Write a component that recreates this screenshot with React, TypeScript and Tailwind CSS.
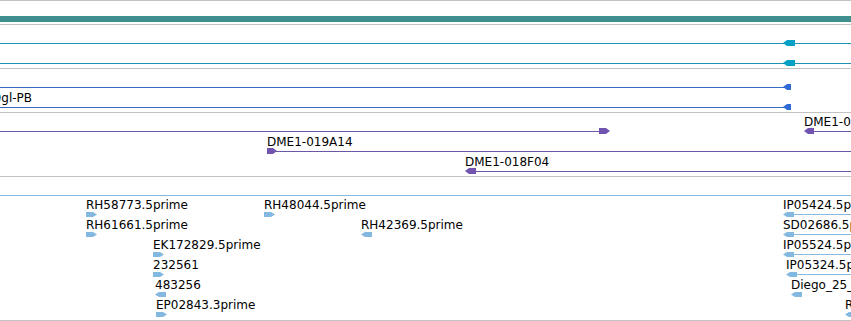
import React from 'react';

type Dir = 'left' | 'right';

interface Feat {
  label?: string;
  lx?: number; // label x
  y: number; // row of the feature line (page coords)
  x1: number;
  x2: number;
  ax?: number; // arrow x
  dir?: Dir;
  aw?: number;
  ah?: number;
  line: string;
  fill: string;
}

interface Track {
  top: number; // first content row on the page
  h: number;
  feats: Feat[];
  bar?: { y: number; h: number; color: string };
}

const CYAN = { line: '#1f93ad', fill: '#05a0c6' };
const BLUE = { line: '#3a69c4', fill: '#2f6bd6' };
const PURPLE = { line: '#6c56a6', fill: '#7153b0' };
const LBLUE = { line: '#8ab9de', fill: '#83b8e0' };

const lb = (label: string, x: number, base: number, dir: Dir, tail = 0): Feat => ({
  label,
  lx: x,
  y: base + 5,
  x1: dir === 'left' ? x + 8 : x,
  x2: tail ? 851 : x,
  ax: x,
  dir,
  aw: 11,
  ah: 5,
  ...LBLUE,
});

const tracks: Track[] = [
  { top: 1, h: 23, bar: { y: 16, h: 6, color: '#408f8f' }, feats: [] },
  {
    top: 25,
    h: 43,
    feats: [
      { y: 43, x1: 0, x2: 851, ax: 783, dir: 'left', aw: 12, ah: 6, ...CYAN },
      { y: 63, x1: 0, x2: 851, ax: 783, dir: 'left', aw: 12, ah: 6, ...CYAN },
    ],
  },
  {
    top: 69,
    h: 43,
    feats: [
      { y: 87, x1: 0, x2: 786, ax: 783, dir: 'left', aw: 8, ah: 6, ...BLUE },
      { label: 'l(2)gl-PB', lx: -19, y: 107, x1: 0, x2: 786, ax: 783, dir: 'left', aw: 8, ah: 6, ...BLUE },
    ],
  },
  {
    top: 113,
    h: 63,
    feats: [
      { y: 131, x1: 0, x2: 602, ax: 599, dir: 'right', aw: 11, ah: 6, ...PURPLE },
      { label: 'DME1-020C09', lx: 804, y: 131, x1: 810, x2: 851, ax: 804, dir: 'left', aw: 10, ah: 6, ...PURPLE },
      { label: 'DME1-019A14', lx: 267, y: 151, x1: 270, x2: 851, ax: 267, dir: 'right', aw: 10, ah: 6, ...PURPLE },
      { label: 'DME1-018F04', lx: 465, y: 171, x1: 470, x2: 851, ax: 465, dir: 'left', aw: 11, ah: 6, ...PURPLE },
    ],
  },
  {
    top: 177,
    h: 143,
    feats: [
      { y: 195, x1: 0, x2: 851, ...LBLUE },
      lb('RH58773.5prime', 86, 209, 'right'),
      lb('RH48044.5prime', 264, 209, 'right'),
      lb('IP05424.5prime', 783, 209, 'left', 1),
      lb('RH61661.5prime', 86, 229, 'right'),
      lb('RH42369.5prime', 361, 229, 'left'),
      lb('SD02686.5prime', 783, 229, 'left', 1),
      lb('EK172829.5prime', 153, 249, 'right'),
      lb('IP05524.5prime', 783, 249, 'left', 1),
      lb('232561', 153, 269, 'right'),
      lb('IP05324.5prime', 786, 269, 'left', 1),
      lb('483256', 155, 289, 'left'),
      lb('Diego_25_D11', 791, 289, 'left'),
      lb('EP02843.3prime', 156, 309, 'right'),
      lb('RE01763.5prime', 845, 309, 'left'),
    ],
  },
];

function Arrow({ dir, w, h, color }: { dir: Dir; w: number; h: number; color: string }) {
  const m = h / 2;
  const t = Math.min(4, w / 2);
  const pts =
    dir === 'left'
      ? `0,${m} ${t},0 ${w},0 ${w},${h} ${t},${h}`
      : `0,0 ${w - t},0 ${w},${m} ${w - t},${h} 0,${h}`;
  return (
    <svg width={w} height={h} viewBox={`0 0 ${w} ${h}`} className="block">
      <polygon points={pts} fill={color} />
    </svg>
  );
}

function FeatureGlyph({ f, top }: { f: Feat; top: number }) {
  const y = f.y - top;
  return (
    <>
      {f.x2 > f.x1 && (
        <div
          className="absolute h-px"
          style={{ left: f.x1, width: f.x2 - f.x1, top: y, background: f.line }}
        />
      )}
      {f.dir && f.ax !== undefined && (
        <div className="absolute" style={{ left: f.ax, top: y - Math.floor((f.ah ?? 6) / 2) }}>
          <Arrow dir={f.dir} w={f.aw ?? 10} h={f.ah ?? 6} color={f.fill} />
        </div>
      )}
      {f.label && (
        <div
          className="absolute whitespace-nowrap text-[12px] leading-[14px] text-black"
          style={{ left: f.lx, top: y - 5 - 11 }}
        >
          {f.label}
        </div>
      )}
    </>
  );
}

export default function App() {
  return (
    <div className="w-[851px] h-[321px] overflow-hidden bg-white border-t border-[#c2c2c2] font-['DejaVu_Sans',Verdana,sans-serif]">
      {tracks.map((t, i) => (
        <div
          key={i}
          className="relative overflow-hidden border-b border-[#c2c2c2]"
          style={{ height: t.h + 1 }}
        >
          {t.bar && (
            <div
              className="absolute left-0 right-0"
              style={{ top: t.bar.y - t.top, height: t.bar.h, background: t.bar.color }}
            />
          )}
          {t.feats.map((f, j) => (
            <FeatureGlyph key={j} f={f} top={t.top} />
          ))}
        </div>
      ))}
    </div>
  );
}
